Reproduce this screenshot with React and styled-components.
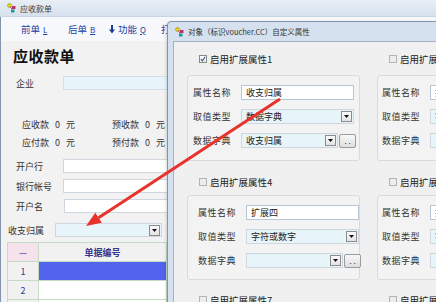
import React from "react";
import styled, { createGlobalStyle } from "styled-components";

const GlobalStyle = createGlobalStyle`
  html, body {
    margin: 0;
    padding: 0;
  }
  body {
    width: 436px;
    height: 302px;
    overflow: hidden;
    background: #f2f2f2;
    font-family: "Noto Sans CJK SC", "Noto Sans", sans-serif;
    color: #222;
  }
`;

const Screen = styled.div`
  position: relative;
  width: 436px;
  height: 302px;
  overflow: hidden;
`;

/* ---------- background window ---------- */

const MainWindow = styled.div`
  display: flex;
  flex-direction: column;
  height: 100%;
`;

const TitleBar = styled.div`
  height: 16px;
  flex: none;
  display: flex;
  align-items: center;
  gap: 3px;
  padding-left: 7px;
  background: linear-gradient(#e7eef6, #d7e1ec);
  border-bottom: 1px solid #c8d4e1;
  font-size: 8px;
  color: #3c3c3c;
`;

const MainBody = styled.div`
  flex: 1;
  display: flex;
  flex-direction: column;
  border-left: 1px solid #8395ad;
  background: #f2f2f2;
`;

const Toolbar = styled.div`
  height: 24px;
  flex: none;
  display: flex;
  align-items: center;
  padding-left: 20px;
  background: #f7f8fb;
`;

const ToolItem = styled.div`
  width: ${(p) => p.$w}px;
  display: flex;
  align-items: center;
  gap: 3px;
  font-size: 9.5px;
  color: #2340a0;
  white-space: nowrap;
`;

const Key = styled.span`
  font-size: 8px;
  text-decoration: underline;
`;

const Heading = styled.div`
  height: 30px;
  line-height: 30px;
  padding-left: 12px;
  font-size: 15px;
  font-weight: 700;
  letter-spacing: 0.5px;
  color: #111;
`;

const FieldRow = styled.div`
  display: flex;
  align-items: center;
  height: 14px;
  margin-top: ${(p) => p.$mt}px;
  padding-left: ${(p) => p.$pl}px;
`;

const FieldLabel = styled.span`
  width: ${(p) => p.$w}px;
  flex: none;
  font-size: 9px;
  color: #333;
`;

const TextBox = styled.div`
  box-sizing: border-box;
  width: ${(p) => p.$w}px;
  height: 14px;
  flex: none;
  border: 1px solid ${(p) => (p.$tint ? "#d6dfe7" : "#cfd6de")};
  background: ${(p) => (p.$tint ? "#e7f5fb" : "#ffffff")};
`;

const MoneyRow = styled.div`
  display: grid;
  grid-template-columns: 90px 90px;
  align-items: center;
  height: 18px;
  margin-top: ${(p) => p.$mt}px;
  padding-left: 21px;
  font-size: 9px;
  color: #333;
`;

const Money = styled.div`
  display: flex;
  gap: 6px;
`;

const Combo = styled.div`
  box-sizing: border-box;
  width: ${(p) => p.$w}px;
  height: ${(p) => p.$h || 15}px;
  flex: none;
  display: flex;
  align-items: center;
  justify-content: space-between;
  padding: 0 1px 0 4px;
  border: 1px solid #ced7e0;
  background: #e7f5fb;
  font-size: 9px;
  color: #222;
  overflow: hidden;
  white-space: nowrap;
`;

const DropBtn = styled.span`
  box-sizing: border-box;
  width: 11px;
  height: 11px;
  flex: none;
  display: flex;
  align-items: center;
  justify-content: center;
  border: 1px solid #8c8c8c;
  background: linear-gradient(#fbfbfb, #e2e2e2);
`;

const Table = styled.div`
  display: grid;
  grid-template-columns: 31px 128px 140px;
  grid-auto-rows: 19px;
  margin: 5px 0 0 6px;
  border-top: 1px solid #c6dbc6;
  border-left: 1px solid #c6dbc6;
`;

const Cell = styled.div`
  box-sizing: border-box;
  display: flex;
  align-items: center;
  justify-content: center;
  border-right: 1px solid #c6dbc6;
  border-bottom: 1px solid #c6dbc6;
  font-size: 9px;
  font-weight: ${(p) => (p.$head ? 700 : 400)};
  color: #35358c;
  background: ${(p) =>
    p.$corner
      ? "#f6e2ec"
      : p.$selected
      ? "#5263ee"
      : p.$head || p.$num
      ? "#f1f1f1"
      : "#ffffff"};
`;

/* ---------- dialog ---------- */

const Dialog = styled.div`
  position: absolute;
  left: 167px;
  top: 21px;
  width: 300px;
  height: 300px;
  box-sizing: border-box;
  display: flex;
  flex-direction: column;
  padding: 0 5px;
  border: 1px solid #8194ad;
  border-radius: 4px 0 0 0;
  background: #d5e1ee;
  box-shadow: -1px 1px 3px rgba(0, 0, 0, 0.15);
`;

const DialogTitle = styled.div`
  height: 19px;
  flex: none;
  display: flex;
  align-items: center;
  gap: 3px;
  padding-left: 2px;
  font-size: 7.5px;
  color: #333;
`;

const Client = styled.div`
  flex: 1;
  display: grid;
  grid-template-columns: 173px 173px;
  column-gap: 17px;
  align-content: start;
  padding: 8px 0 0 13px;
  border: 1px solid #a2b2c6;
  background: #f0f0f0;
`;

const Column = styled.div`
  display: flex;
  flex-direction: column;
`;

const CheckRow = styled.div`
  height: 18px;
  flex: none;
  display: flex;
  align-items: center;
  gap: 3px;
  margin-top: ${(p) => p.$mt || 0}px;
  padding-left: 12px;
  font-size: 9.5px;
  color: #222;
`;

const CheckBox = styled.span`
  box-sizing: border-box;
  width: 8px;
  height: 8px;
  flex: none;
  display: flex;
  align-items: center;
  justify-content: center;
  border: 1px solid ${(p) => (p.$on ? "#8a8a8a" : "#b4b4b4")};
  background: ${(p) =>
    p.$on ? "linear-gradient(#ffffff, #e9e9e9)" : "#ececec"};
`;

const Group = styled.div`
  box-sizing: border-box;
  height: ${(p) => p.$h}px;
  flex: none;
  display: flex;
  flex-direction: column;
  gap: 9px;
  margin-top: ${(p) => p.$mt}px;
  padding: 9px 0 0 ${(p) => p.$pl}px;
  border: 1px solid #dadada;
  border-radius: 3px;
  background: #f3f3f3;
`;

const PropRow = styled.div`
  height: 15px;
  display: flex;
  align-items: center;
  gap: 1px;
`;

const PropLabel = styled.span`
  width: 47px;
  flex: none;
  font-size: 9px;
  letter-spacing: 0.5px;
  color: #333;
`;

const Input = styled.div`
  box-sizing: border-box;
  width: 113px;
  height: 15px;
  flex: none;
  display: flex;
  align-items: center;
  padding-left: 4px;
  border: 1px solid #b9c6d6;
  background: #ffffff;
  font-size: 9px;
  color: #222;
  white-space: nowrap;
  overflow: hidden;
`;

const DotsBtn = styled.span`
  box-sizing: border-box;
  width: 17px;
  height: 14px;
  flex: none;
  display: flex;
  align-items: center;
  justify-content: center;
  border: 1px solid #9a9a9a;
  border-radius: 2px;
  background: linear-gradient(#f8f8f8, #dedede);
  font-size: 8px;
  color: #333;
  line-height: 1;
`;

const ArrowLayer = styled.svg`
  position: absolute;
  left: 0;
  top: 0;
  pointer-events: none;
`;

/* ---------- small drawings ---------- */

const AppIcon = () => (
  <svg width="10" height="10" viewBox="0 0 10 10">
    <circle cx="2.5" cy="2.5" r="2" fill="#e8d21a" stroke="#8a7a10" strokeWidth="0.5" />
    <rect x="5" y="3" width="3.5" height="3" fill="#c2306a" />
    <rect x="4" y="6.5" width="3.5" height="3" fill="#1a9a9a" />
    <line x1="3.5" y1="3.5" x2="5" y2="6.5" stroke="#555" strokeWidth="0.7" />
  </svg>
);

const DownArrow = () => (
  <svg width="6" height="9" viewBox="0 0 6 9">
    <rect x="2" y="0" width="2" height="5" fill="#1d3b95" />
    <path d="M0 4.5 L6 4.5 L3 8.5 Z" fill="#1d3b95" />
  </svg>
);

const Caret = () => (
  <svg width="5" height="3" viewBox="0 0 5 3">
    <path d="M0 0 L5 0 L2.5 3 Z" fill="#111" />
  </svg>
);

const Tick = () => (
  <svg width="6" height="6" viewBox="0 0 6 6">
    <path d="M0.8 3 L2.4 4.8 L5.2 0.8" fill="none" stroke="#3a4f8c" strokeWidth="1.1" />
  </svg>
);

const ComboBox = ({ w, text }) => (
  <Combo $w={w}>
    <span>{text}</span>
    <DropBtn>
      <Caret />
    </DropBtn>
  </Combo>
);

const PropGroup = ({ h, mt, pl, name, kind, dict }) => (
  <Group $h={h} $mt={mt} $pl={pl}>
    <PropRow>
      <PropLabel>属性名称</PropLabel>
      <Input>{name}</Input>
    </PropRow>
    <PropRow>
      <PropLabel>取值类型</PropLabel>
      <ComboBox w={113} text={kind} />
    </PropRow>
    <PropRow>
      <PropLabel>数据字典</PropLabel>
      <ComboBox w={97} text={dict} />
      <DotsBtn>. .</DotsBtn>
    </PropRow>
  </Group>
);

const Check = ({ on, label, mt }) => (
  <CheckRow $mt={mt}>
    <CheckBox $on={on}>{on && <Tick />}</CheckBox>
    {label}
  </CheckRow>
);

const App = () => {
  const tip = [86, 226];
  const start = [280, 99];
  const dx = start[0] - tip[0];
  const dy = start[1] - tip[1];
  const len = Math.hypot(dx, dy);
  const ux = dx / len;
  const uy = dy / len;
  const bx = tip[0] + ux * 15;
  const by = tip[1] + uy * 15;
  const head = `${tip[0]},${tip[1]} ${bx - uy * 6},${by + ux * 6} ${bx + uy * 6},${by - ux * 6}`;

  return (
    <Screen>
      <GlobalStyle />
      <MainWindow>
        <TitleBar>
          <AppIcon />
          应收款单
        </TitleBar>
        <MainBody>
          <Toolbar>
            <ToolItem $w={47}>
              前单<Key>L</Key>
            </ToolItem>
            <ToolItem $w={41}>
              后单<Key>B</Key>
            </ToolItem>
            <ToolItem $w={52}>
              <DownArrow />
              功能<Key>Q</Key>
            </ToolItem>
            <ToolItem $w={50}>
              打印<Key>P</Key>
            </ToolItem>
          </Toolbar>
          <Heading>应收款单</Heading>
          <FieldRow $mt={5} $pl={15}>
            <FieldLabel $w={47}>企业</FieldLabel>
            <TextBox $w={300} $tint />
          </FieldRow>
          <MoneyRow $mt={25}>
            <Money>
              <span>应收款</span>
              <span>0</span>
              <span>元</span>
            </Money>
            <Money>
              <span>预收款</span>
              <span>0</span>
              <span>元</span>
            </Money>
          </MoneyRow>
          <MoneyRow $mt={0}>
            <Money>
              <span>应付款</span>
              <span>0</span>
              <span>元</span>
            </Money>
            <Money>
              <span>预付款</span>
              <span>0</span>
              <span>元</span>
            </Money>
          </MoneyRow>
          <FieldRow $mt={8} $pl={15}>
            <FieldLabel $w={47}>开户行</FieldLabel>
            <TextBox $w={300} />
          </FieldRow>
          <FieldRow $mt={6} $pl={15}>
            <FieldLabel $w={47}>银行帐号</FieldLabel>
            <TextBox $w={300} />
          </FieldRow>
          <FieldRow $mt={6} $pl={15}>
            <FieldLabel $w={48}>开户名</FieldLabel>
            <TextBox $w={300} />
          </FieldRow>
          <FieldRow $mt={10} $pl={7}>
            <FieldLabel $w={47}>收支归属</FieldLabel>
            <Combo $w={107} $h={14}>
              <span />
              <DropBtn>
                <Caret />
              </DropBtn>
            </Combo>
          </FieldRow>
          <Table>
            <Cell $corner>—</Cell>
            <Cell $head>单据编号</Cell>
            <Cell $head />
            <Cell $num>1</Cell>
            <Cell $selected />
            <Cell />
            <Cell $num>2</Cell>
            <Cell />
            <Cell />
            <Cell $num>3</Cell>
            <Cell />
            <Cell />
          </Table>
        </MainBody>
      </MainWindow>

      <Dialog>
        <DialogTitle>
          <AppIcon />
          对象（标识voucher.CC）自定义属性
        </DialogTitle>
        <Client>
          <Column>
            <Check on label="启用扩展属性1" />
            <PropGroup h={86} mt={7} pl={5} name="收支归属" kind="数据字典" dict="收支归属" />
            <Check label="启用扩展属性4" mt={12} />
            <PropGroup h={85} mt={4} pl={10} name="扩展四" kind="字符或数字" dict="" />
            <Check label="启用扩展属性7" mt={11} />
          </Column>
          <Column>
            <Check label="启用扩展属性2" />
            <PropGroup h={86} mt={7} pl={4} name="扩展二" kind="字符或数字" dict="" />
            <Check label="启用扩展属性5" mt={12} />
            <PropGroup h={85} mt={4} pl={4} name="扩展五" kind="字符或数字" dict="" />
            <Check label="启用扩展属性8" mt={11} />
          </Column>
        </Client>
      </Dialog>

      <ArrowLayer width="436" height="302" viewBox="0 0 436 302">
        <line
          x1={start[0]}
          y1={start[1]}
          x2={bx}
          y2={by}
          stroke="#e8332c"
          strokeWidth="3"
        />
        <polygon points={head} fill="#e8332c" />
      </ArrowLayer>
    </Screen>
  );
};

export default App;
